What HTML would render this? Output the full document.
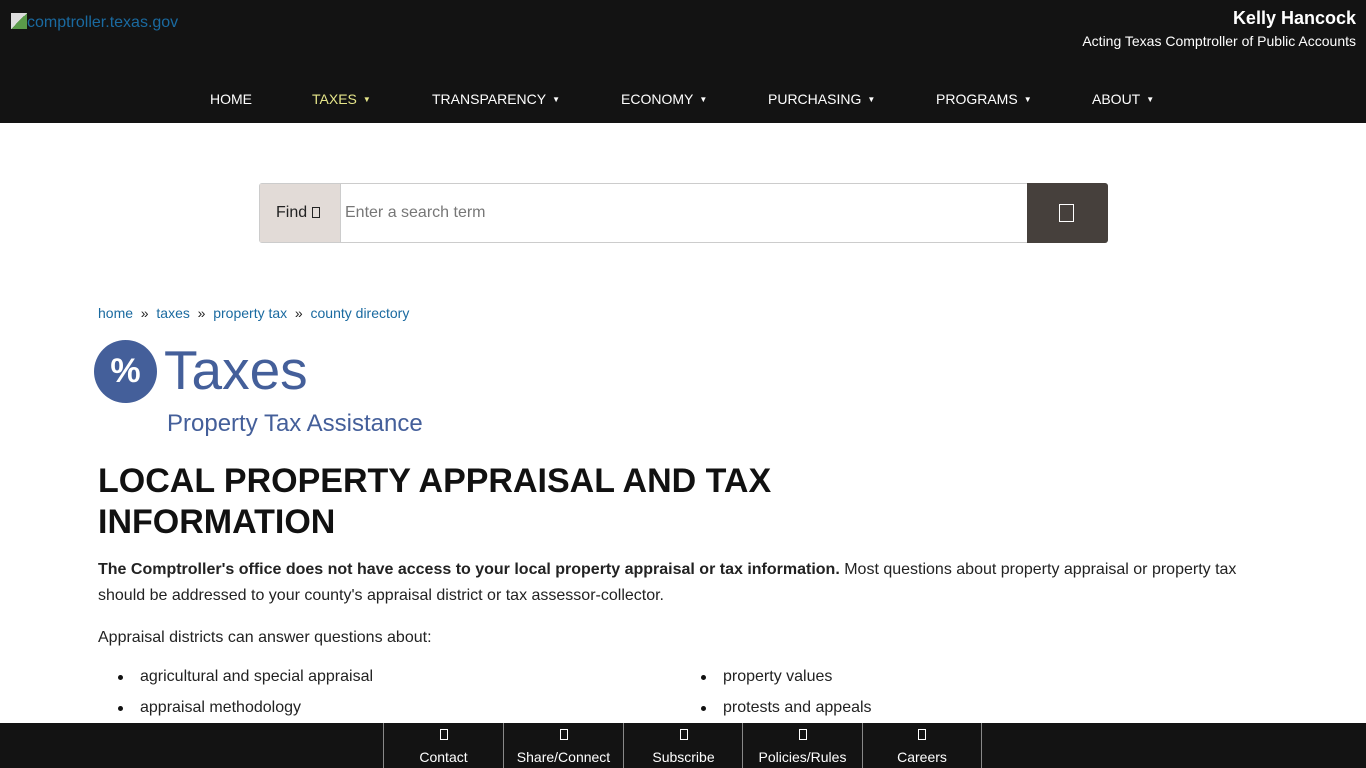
<!DOCTYPE html>
<html><head><meta charset="utf-8"><style>
*{box-sizing:border-box;margin:0;padding:0}
body{width:1366px;height:768px;overflow:hidden;background:#fff;font-family:"Liberation Sans",Arial,sans-serif;position:relative;color:#222}
.hdr{position:absolute;left:0;top:0;width:1366px;height:123px;background:#131313}
.logo{position:absolute;left:11px;top:13px;color:#1a6aa0;font-size:16px}
.logo i{display:inline-block;width:16px;height:16px;background:linear-gradient(135deg,#ddd 50%,#5a9a4a 50%);vertical-align:-2px}
.name{position:absolute;right:10px;top:8px;color:#fff;text-align:right}
.name b{font-size:18px;display:block}
.name span{font-size:14px;display:block;margin-top:4px}
.nav a{position:absolute;top:91px;color:#fff;font-size:14px;text-decoration:none}
.nav a small{font-size:8px;margin-left:6px;vertical-align:2px}
.box{display:inline-block;width:8px;height:11px;border:1px solid currentColor;vertical-align:-1px}
.search{position:absolute;left:259px;top:183px;width:849px;height:60px;border:1px solid #ccc;border-radius:3px}
.find{position:absolute;left:0;top:0;width:81px;height:58px;background:#e2dbd7;border-right:1px solid #ccc;font-size:16px;padding:20px 0 0 16px;color:#222}
.ph{position:absolute;left:85px;top:20px;color:#777;font-size:16px}
.btn{position:absolute;right:-1px;top:-1px;width:81px;height:60px;background:#46403c;border-radius:0 3px 3px 0;color:#fff}
.btn .box{position:absolute;left:32px;top:21px;width:15px;height:18px}
.crumb{position:absolute;left:98px;top:305px;font-size:14px;color:#222}
.crumb a{color:#1a6aa0;text-decoration:none}
.circ{position:absolute;left:94px;top:340px;width:63px;height:63px;border-radius:50%;background:#445f9a;color:#fff;font-size:34px;text-align:center;line-height:63px;font-weight:bold}
.t1{position:absolute;left:164px;top:338px;font-size:55px;color:#445f9a}
.t2{position:absolute;left:167px;top:410px;font-size:24px;color:#445f9a}
h1{position:absolute;left:98px;top:461px;font-size:34px;line-height:41px;color:#111;font-weight:bold}
.p1{position:absolute;left:98px;top:557px;width:1170px;font-size:16px;line-height:26px;color:#222}
.p2{position:absolute;left:98px;top:629px;font-size:16px}
.li{position:absolute;font-size:16px}
.li:before{content:"";position:absolute;left:-22px;top:7px;width:5px;height:5px;border-radius:50%;background:#111}
.ftr{position:absolute;left:0;top:723px;width:1366px;height:45px;background:#131313}
.fi{position:absolute;top:0;width:120px;height:45px;border-left:1px solid #888;color:#fff;text-align:center;font-size:14px}
.fi .box{display:block;margin:6px auto 0}
.fi span{display:block;margin-top:9px}
</style></head><body>
<div class="hdr">
<div class="logo"><i></i>comptroller.texas.gov</div>
<div class="name"><b>Kelly Hancock</b><span>Acting Texas Comptroller of Public Accounts</span></div>
<div class="nav">
<a style="left:210px">HOME</a>
<a style="left:312px;color:#e6e68a">TAXES<small>▼</small></a>
<a style="left:432px">TRANSPARENCY<small>▼</small></a>
<a style="left:621px">ECONOMY<small>▼</small></a>
<a style="left:768px">PURCHASING<small>▼</small></a>
<a style="left:936px">PROGRAMS<small>▼</small></a>
<a style="left:1092px">ABOUT<small>▼</small></a>
</div></div>
<div class="search"><div class="find">Find <span class="box"></span></div><div class="ph">Enter a search term</div><div class="btn"><span class="box"></span></div></div>
<div class="crumb"><a>home</a> &nbsp;»&nbsp; <a>taxes</a> &nbsp;»&nbsp; <a>property tax</a> &nbsp;»&nbsp; <a>county directory</a></div>
<div class="circ">%</div>
<div class="t1">Taxes</div>
<div class="t2">Property Tax Assistance</div>
<h1>LOCAL PROPERTY APPRAISAL AND TAX<br>INFORMATION</h1>
<div class="p1"><b>The Comptroller's office does not have access to your local property appraisal or tax information.</b> Most questions about property appraisal or property tax should be addressed to your county's appraisal district or tax assessor-collector.</div>
<div class="p2">Appraisal districts can answer questions about:</div>
<div class="li" style="left:140px;top:668px">agricultural and special appraisal</div>
<div class="li" style="left:140px;top:699px">appraisal methodology</div>
<div class="li" style="left:723px;top:668px">property values</div>
<div class="li" style="left:723px;top:699px">protests and appeals</div>
<div class="ftr">
<div class="fi" style="left:383px"><i class="box"></i><span>Contact</span></div>
<div class="fi" style="left:503px"><i class="box"></i><span>Share/Connect</span></div>
<div class="fi" style="left:623px"><i class="box"></i><span>Subscribe</span></div>
<div class="fi" style="left:742px"><i class="box"></i><span>Policies/Rules</span></div>
<div class="fi" style="left:862px;border-right:1px solid #888"><i class="box"></i><span>Careers</span></div>
</div>
</body></html>
